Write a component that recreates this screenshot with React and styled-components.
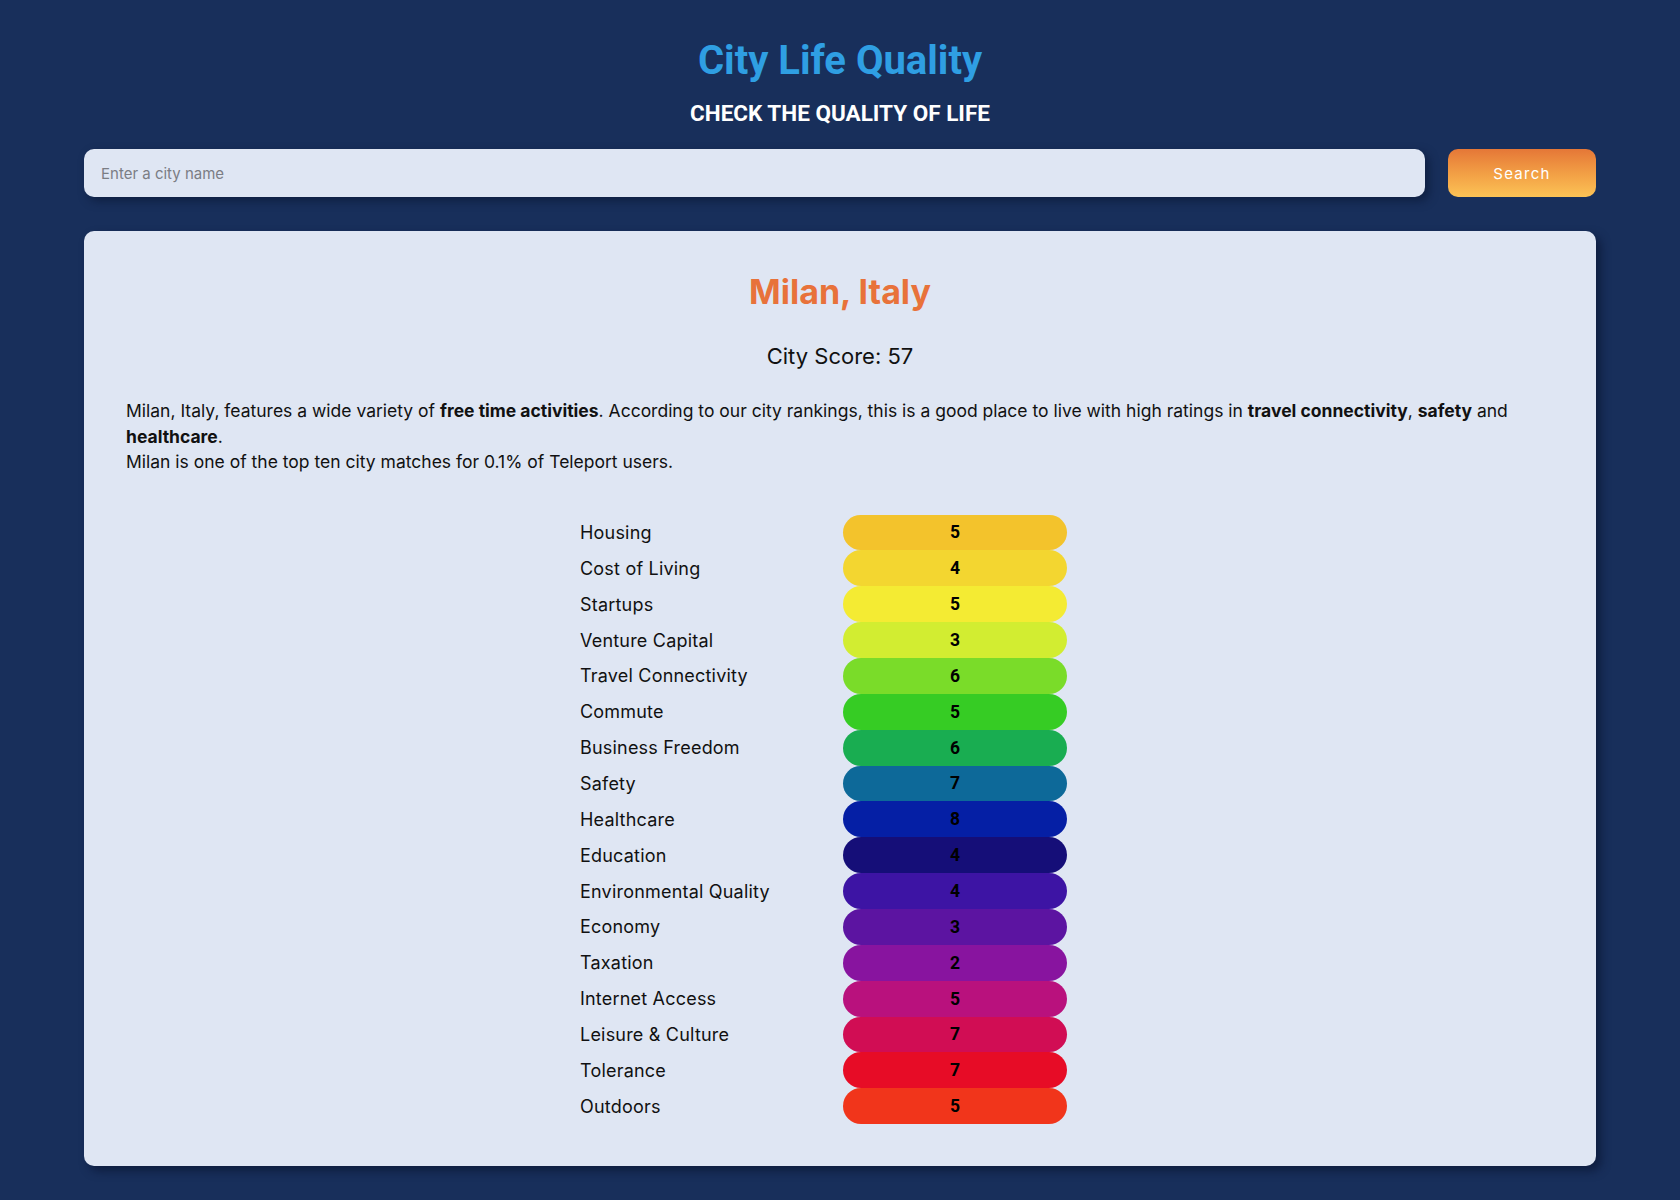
import React from "react";
import styled, { createGlobalStyle } from "styled-components";

const Global = createGlobalStyle`
  html, body { margin: 0; padding: 0; }
  body {
    background: #182f5b;
    font-family: Inter, "Noto Sans", sans-serif;
    color: #111;
  }
`;

const Page = styled.div`
  width: 90%;
  margin: 0 auto;
  padding: 37px 0 34px;
  display: flex;
  flex-direction: column;
  align-items: stretch;
`;

const Title = styled.h1`
  margin: 0;
  text-align: center;
  font-family: Roboto, "Liberation Sans", sans-serif;
  font-weight: 700;
  font-size: 40px;
  line-height: 48px;
  color: #2f9fe3;
`;

const Subtitle = styled.h2`
  margin: 15px 0 0;
  text-align: center;
  font-family: Roboto, "Liberation Sans", sans-serif;
  font-weight: 700;
  font-size: 22.5px;
  line-height: 27px;
  color: #ffffff;
`;

const SearchBar = styled.form`
  margin-top: 22px;
  display: flex;
  gap: 23px;
`;

const Input = styled.input`
  flex: 1;
  height: 48px;
  box-sizing: border-box;
  border: none;
  border-radius: 10px;
  background: #dfe6f3;
  padding: 0 17px;
  font-family: Inter, sans-serif;
  font-size: 15px;
  color: #222;
  outline: none;
  box-shadow: 4px 4px 10px rgba(5, 15, 40, 0.5);
  &::placeholder { color: #7b7d84; }
`;

const Button = styled.button`
  width: 148px;
  height: 48px;
  border: none;
  border-radius: 10px;
  background: linear-gradient(180deg, #e57737 0%, #f3a246 55%, #fcc356 100%);
  color: #fff;
  font-family: Inter, sans-serif;
  font-size: 15px;
  letter-spacing: 1.3px;
  cursor: pointer;
`;

const Card = styled.section`
  margin-top: 34px;
  background: #dfe6f3;
  border-radius: 10px;
  padding: 40px 42px 42px;
  box-shadow: 5px 5px 10px rgba(5, 15, 40, 0.55);
`;

const CityName = styled.h2`
  margin: 0;
  text-align: center;
  font-family: Inter, sans-serif;
  font-weight: 700;
  font-size: 34px;
  line-height: 41px;
  color: #e8723a;
`;

const Score = styled.p`
  margin: 31px 0 0;
  text-align: center;
  font-size: 22px;
  line-height: 27px;
  color: #111;
`;

const Summary = styled.div`
  margin-top: 28px;
  font-size: 17.5px;
  line-height: 25.5px;
  color: #111;
  p { margin: 0; }
  b { font-weight: 700; }
`;

const Ratings = styled.div`
  margin: 40px 0 0 454px;
  display: grid;
  grid-template-columns: 263px 224px;
  grid-auto-rows: 35.86px;
  width: 487px;
`;

const Label = styled.div`
  display: flex;
  align-items: center;
  font-size: 18px;
  letter-spacing: 0.2px;
  color: #111;
`;

const Bar = styled.div`
  display: flex;
  align-items: center;
  justify-content: center;
  border-radius: 18px;
  background: ${(p) => p.$color};
  font-family: Roboto, "Liberation Sans", sans-serif;
  font-weight: 700;
  font-size: 17.5px;
  color: #000;
`;

const categories = [
  ["Housing", 5, "#f3c32c"],
  ["Cost of Living", 4, "#f3d630"],
  ["Startups", 5, "#f4eb33"],
  ["Venture Capital", 3, "#d2ed31"],
  ["Travel Connectivity", 6, "#7adc29"],
  ["Commute", 5, "#36cc24"],
  ["Business Freedom", 6, "#19ad51"],
  ["Safety", 7, "#0d6999"],
  ["Healthcare", 8, "#051fa5"],
  ["Education", 4, "#150e78"],
  ["Environmental Quality", 4, "#3d14a4"],
  ["Economy", 3, "#5c14a1"],
  ["Taxation", 2, "#88149f"],
  ["Internet Access", 5, "#b9117d"],
  ["Leisure & Culture", 7, "#d10d54"],
  ["Tolerance", 7, "#e70c26"],
  ["Outdoors", 5, "#f1351b"],
];

export default function App() {
  return (
    <>
      <Global />
      <Page>
        <Title>City Life Quality</Title>
        <Subtitle>CHECK THE QUALITY OF LIFE</Subtitle>
        <SearchBar onSubmit={(e) => e.preventDefault()}>
          <Input placeholder="Enter a city name" />
          <Button type="submit">Search</Button>
        </SearchBar>
        <Card>
          <CityName>Milan, Italy</CityName>
          <Score>City Score: 57</Score>
          <Summary>
            <p>
              Milan, Italy, features a wide variety of <b>free time activities</b>. According to our city
              rankings, this is a good place to live with high ratings in <b>travel connectivity</b>,{" "}
              <b>safety</b> and <b>healthcare</b>.
            </p>
            <p>Milan is one of the top ten city matches for 0.1% of Teleport users.</p>
          </Summary>
          <Ratings>
            {categories.map(([name, score, color]) => (
              <React.Fragment key={name}>
                <Label>{name}</Label>
                <Bar $color={color}>{score}</Bar>
              </React.Fragment>
            ))}
          </Ratings>
        </Card>
      </Page>
    </>
  );
}
